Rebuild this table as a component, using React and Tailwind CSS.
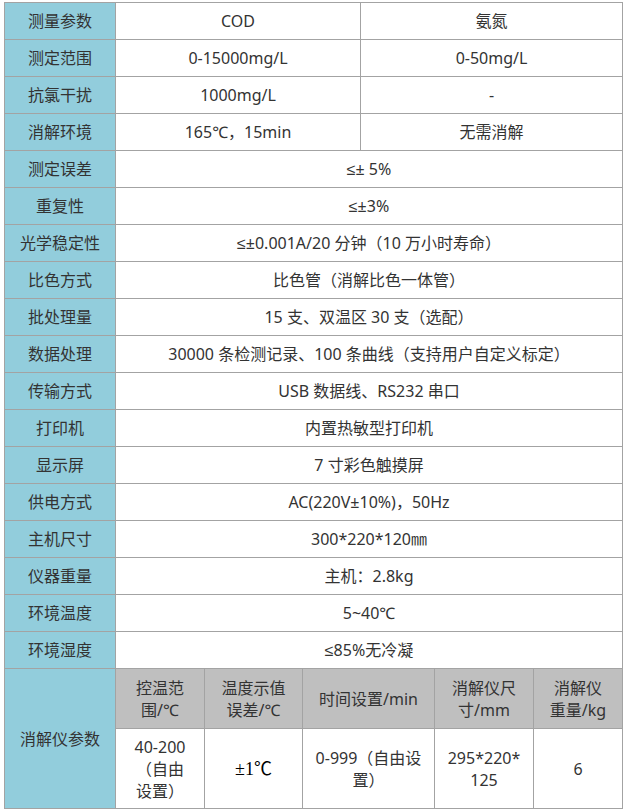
const rows = [
  ['测量参数', 'COD', '氨氮'],
  ['测定范围', '0-15000mg/L', '0-50mg/L'],
  ['抗氯干扰', '1000mg/L', '-'],
  ['消解环境', '165℃，15min', '无需消解'],
  ['测定误差', '≤± 5%'],
  ['重复性', '≤±3%'],
  ['光学稳定性', '≤±0.001A/20 分钟（10 万小时寿命）'],
  ['比色方式', '比色管（消解比色一体管）'],
  ['批处理量', '15 支、双温区 30 支（选配）'],
  ['数据处理', '30000 条检测记录、100 条曲线（支持用户自定义标定）'],
  ['传输方式', 'USB 数据线、RS232 串口'],
  ['打印机', '内置热敏型打印机'],
  ['显示屏', '7 寸彩色触摸屏'],
  ['供电方式', 'AC(220V±10%)，50Hz'],
  ['主机尺寸', '300*220*120㎜'],
  ['仪器重量', '主机：2.8kg'],
  ['环境温度', '5~40℃'],
  ['环境湿度', '≤85%无冷凝'],
];

const cell = 'border border-[#a3a3a3] p-0 text-center align-middle';
const label = `${cell} bg-[#92cddc]`;
const head = `${cell} bg-[#bfbfbf] leading-[22px]`;
const data = `${cell} bg-white leading-[22px]`;

export default function App() {
  return (
    <div className="min-h-screen bg-white pt-[2px] pl-[4px] font-['Noto_Sans','Liberation_Sans','Noto_Sans_CJK_SC',sans-serif] text-[16px] text-[#333]">
      <table className="w-[618px] table-fixed border-collapse">
        <colgroup>
          <col className="w-[111px]" />
          <col className="w-[89px]" />
          <col className="w-[98px]" />
          <col className="w-[58px]" />
          <col className="w-[74px]" />
          <col className="w-[99px]" />
          <col className="w-[89px]" />
        </colgroup>
        <tbody>
          {rows.map(([name, a, b]) => (
            <tr key={name} className="h-[37px]">
              <td className={label}>{name}</td>
              {b === undefined ? (
                <td colSpan={6} className={`${cell} bg-white`}>{a}</td>
              ) : (
                <>
                  <td colSpan={3} className={`${cell} bg-white`}>{a}</td>
                  <td colSpan={3} className={`${cell} bg-white`}>{b}</td>
                </>
              )}
            </tr>
          ))}

          {/* 消解仪参数: header row + value row */}
          <tr className="h-[60px]">
            <td rowSpan={2} className={label}>消解仪参数</td>
            <td className={head}>控温范<br />围/℃</td>
            <td className={head}>温度示值<br />误差/℃</td>
            <td colSpan={2} className={head}>时间设置/min</td>
            <td className={head}>消解仪尺<br />寸/mm</td>
            <td className={head}>消解仪<br />重量/kg</td>
          </tr>
          <tr className="h-[80px]">
            <td className={data}>40-200<br />（自由<br />设置）</td>
            <td className={`${data} font-['Liberation_Serif','Noto_Sans_CJK_SC',serif] text-[18px] text-black`}>±1℃</td>
            <td colSpan={2} className={data}>0-999（自由设<br />置）</td>
            <td className={data}>295*220*<br />125</td>
            <td className={data}>6</td>
          </tr>
        </tbody>
      </table>
    </div>
  );
}
